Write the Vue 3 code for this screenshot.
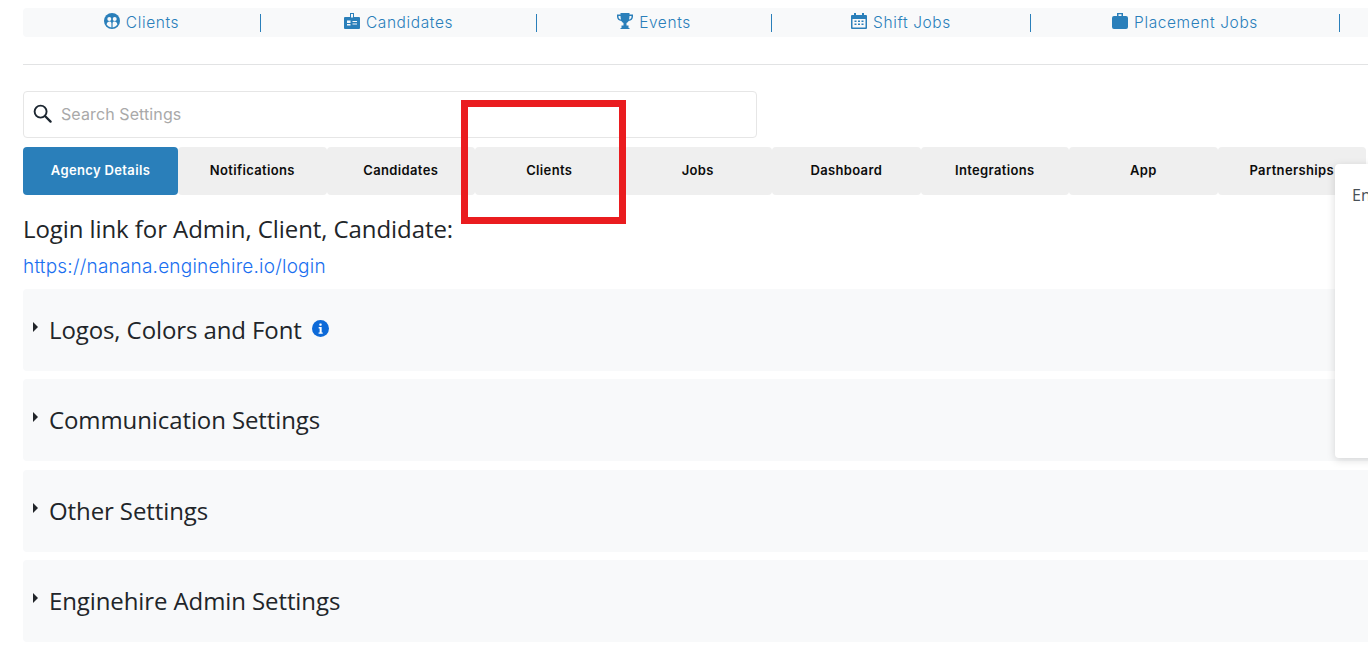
<script setup>
const navItems = [
  { label: 'Clients', icon: 'clients' },
  { label: 'Candidates', icon: 'badge' },
  { label: 'Events', icon: 'trophy' },
  { label: 'Shift Jobs', icon: 'calendar' },
  { label: 'Placement Jobs', icon: 'case' }
]
const tabs = ['Agency Details', 'Notifications', 'Candidates', 'Clients', 'Jobs', 'Dashboard', 'Integrations', 'App', 'Partnerships']
const sections = ['Logos, Colors and Font', 'Communication Settings', 'Other Settings', 'Enginehire Admin Settings']
</script>

<template>
  <div class="page">
    <nav class="topnav">
      <a v-for="item in navItems" :key="item.label" class="nav-item">
        <svg v-if="item.icon === 'clients'" class="nav-icon" viewBox="0 0 16 16">
          <circle cx="8" cy="8" r="8" fill="#2a7fba" />
          <circle cx="5.3" cy="6" r="2" fill="#f8f9fa" />
          <circle cx="10.7" cy="6" r="2" fill="#f8f9fa" />
          <path d="M2.6 11.5c.4-2 1.5-2.9 2.8-2.9 1 0 1.7.5 2 1.3v4.5c-2-.2-3.800-1.300-4.800-2.900zM13.400 11.500c-.4-2-1.500-2.900-2.800-2.900-1 0-1.700.5-2 1.300v4.500c2-.2 3.800-1.300 4.800-2.900z" fill="#f8f9fa" />
        </svg>
        <svg v-else-if="item.icon === 'badge'" class="nav-icon" viewBox="0 0 16 16">
          <path fill-rule="evenodd" fill="#2a7fba" d="M6 0h4v4h5a1 1 0 0 1 1 1v10a1 1 0 0 1-1 1H1a1 1 0 0 1-1-1V5a1 1 0 0 1 1-1h5zM7 1v3.500h2V1zM3 7.500v2.500h3.500V7.500zM3 11v1.500h3.500V11zM8.500 8v1h4.500V8zM8.500 10.500v1h4.500v-1z" />
        </svg>
        <svg v-else-if="item.icon === 'trophy'" class="nav-icon" viewBox="0 0 16 16">
          <path fill="#2a7fba" d="M3.500 0h9v1.500H16v2.200c0 2.300-1.800 4-4.300 4.300-.6 1-1.300 1.700-2.200 2v2.500H11.500V15h1v1H3.500v-1h1v-2.500h2V10c-.9-.3-1.600-1-2.200-2C1.800 7.700 0 6 0 3.700V1.500h3.500zM1.500 3v.7c0 1.300.9 2.400 2.500 2.800-.3-1-.5-2.200-.5-3.500zM14.500 3h-2c0 1.300-.2 2.500-.5 3.500 1.600-.4 2.500-1.500 2.500-2.800z" />
        </svg>
        <svg v-else-if="item.icon === 'calendar'" class="nav-icon" viewBox="0 0 16 16">
          <path fill-rule="evenodd" fill="#2a7fba" d="M3 0h2v2h6V0h2v2h2a1 1 0 0 1 1 1v12a1 1 0 0 1-1 1H1a1 1 0 0 1-1-1V3a1 1 0 0 1 1-1h2zM1.500 6v8.500h13V6zM3.500 7.500h2v1.500h-2zM7 7.500h2v1.500H7zM10.500 7.500h2v1.500h-2zM3.500 10.500h2v1.500h-2zM7 10.500h2v1.500H7zM10.500 10.500h2v1.500h-2z" />
        </svg>
        <svg v-else class="nav-icon" viewBox="0 0 16 16">
          <path fill-rule="evenodd" fill="#2a7fba" d="M5 0h6v3h3a2 2 0 0 1 2 2v9a2 2 0 0 1-2 2H2a2 2 0 0 1-2-2V5a2 2 0 0 1 2-2h3zM6.500 1.300V3h3V1.300z" />
        </svg>
        <span>{{ item.label }}</span>
      </a>
    </nav>

    <hr class="rule" />

    <label class="search">
      <svg class="search-icon" viewBox="0 0 20 20">
        <circle cx="8" cy="8" r="6.300" fill="none" stroke="#1c2630" stroke-width="2" />
        <path d="M12.600 12.600 18.500 18.500" stroke="#1c2630" stroke-width="2.400" stroke-linecap="round" />
      </svg>
      <input class="search-input" type="text" placeholder="Search Settings" />
    </label>

    <div class="tabs">
      <button v-for="(tab, i) in tabs" :key="tab" class="tab" :class="{ active: i === 0 }">{{ tab }}</button>
    </div>

    <h2 class="login-title">Login link for Admin, Client, Candidate:</h2>
    <a class="login-link">https://nanana.enginehire.io/login</a>

    <section v-for="(section, i) in sections" :key="section" class="panel">
      <span class="caret"></span>
      <span class="panel-title">{{ section }}</span>
      <svg v-if="i === 0" class="info" viewBox="0 0 16 16">
        <circle cx="8" cy="8" r="8" fill="#0d6ad8" />
        <rect x="6.900" y="3.200" width="2.200" height="2.200" rx=".6" fill="#fff" />
        <path d="M6.300 6.700h2.800v5h1v1.300H6.200v-1.300h1V8H6.300z" fill="#fff" />
      </svg>
    </section>

    <div class="highlight"></div>
    <aside class="popover">Enter</aside>
  </div>
</template>

<style>
body {
  margin: 0;
  background: #fff;
  overflow: hidden;
}
</style>

<style scoped>
.page {
  position: relative;
  width: 1368px;
  height: 647px;
  box-sizing: border-box;
  padding: 8px 0 0 23px;
  overflow: hidden;
  font-family: Inter, "Liberation Sans", sans-serif;
}
.topnav {
  display: grid;
  grid-template-columns: 238px 276px 235px 259px 309px 28px;
  height: 29px;
  background: #f8f9fa;
  border-radius: 4px 0 0 4px;
  align-items: center;
}
.nav-item {
  display: flex;
  align-items: center;
  justify-content: center;
  gap: 6px;
  height: 18px;
  border-right: 1px solid #2a7fba;
  color: #2a7fba;
  font-size: 15.500px;
  font-weight: 300;
  letter-spacing: .6px;
}
.nav-icon {
  width: 16px;
  height: 16px;
  margin-top: -4px;
}
.rule {
  margin: 27px 0 26px;
  border: 0;
  border-top: 1px solid #e2e3e4;
}
.search {
  display: flex;
  align-items: center;
  width: 734px;
  height: 47px;
  box-sizing: border-box;
  padding: 0 0 2px 9px;
  border: 1px solid #e6e6e6;
  border-radius: 4px;
}
.search-icon {
  width: 19px;
  height: 19px;
  margin: 0 9px 0 0;
}
.search-input {
  flex: 1;
  border: 0;
  outline: 0;
  padding: 0;
  background: transparent;
  font: 16px Inter, "Liberation Sans", sans-serif;
  letter-spacing: .1px;
}
.search-input::placeholder {
  color: #a9a9a9;
  opacity: 1;
}
.tabs {
  display: grid;
  grid-template-columns: 155px repeat(8, 148.500px);
  margin-top: 9px;
  height: 48px;
}
.tab {
  border: 0;
  padding: 0 0 2px;
  background: #efefef;
  border-radius: 4px;
  color: #0c0c0c;
  font: 600 13px Inter, "Liberation Sans", sans-serif;
  letter-spacing: .35px;
}
.tab.active {
  background: #2a7fba;
  color: #fff;
}
.login-title {
  margin: 19px 0 0;
  font: 400 24px/29px "Open Sans", sans-serif;
  letter-spacing: -.08px;
  color: #212529;
}
.login-link {
  display: block;
  margin: 13px 0 11px;
  color: #1a6ff0;
  font-size: 19px;
  font-weight: 300;
  line-height: 22px;
  letter-spacing: .2px;
}
.panel {
  display: flex;
  align-items: center;
  height: 82px;
  margin-bottom: 8.330px;
  padding-left: 10px;
  background: #f8f9fa;
  border-radius: 4px 0 0 4px;
}
.caret {
  width: 0;
  height: 0;
  margin: -6px 11px 0 0;
  border-left: 5px solid #212529;
  border-top: 5px solid transparent;
  border-bottom: 5px solid transparent;
}
.panel-title {
  font: 400 24px/30px "Open Sans", sans-serif;
  letter-spacing: -.1px;
  color: #212529;
}
.info {
  width: 17px;
  height: 17px;
  margin: -4px 0 0 10px;
}
.highlight {
  position: absolute;
  left: 461px;
  top: 100px;
  width: 165px;
  height: 124px;
  box-sizing: border-box;
  border: 7px solid #ea1c1f;
}
.popover {
  position: absolute;
  left: 1335px;
  top: 164px;
  width: 300px;
  height: 294px;
  box-sizing: border-box;
  padding: 21px 0 0 17px;
  background: #fff;
  border-radius: 4px;
  box-shadow: 0 2px 8px rgba(0, 0, 0, .15);
  color: #495057;
  font: 16px/20px "Open Sans", sans-serif;
}
</style>
